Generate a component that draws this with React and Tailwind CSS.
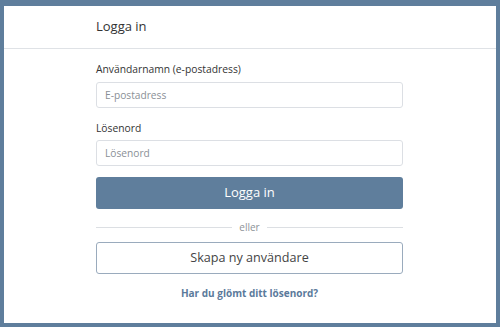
import React from 'react';

const App = () => {
  return (
    <div className="h-[327px] bg-[#5f7e9c] pt-[6px] px-[4px] pb-[4px] font-['Open_Sans',sans-serif]">
      <div className="bg-white h-[317px]">
        {/* Header */}
        <div className="h-[43px] border-b border-[#dfe2e6] flex items-center pl-[92px] text-[13px] text-[#333]">
          Logga in
        </div>

        {/* Form */}
        <form className="pl-[92px] w-[399px]" onSubmit={e => e.preventDefault()}>
          <label className="block mt-[12px] text-[10.3px] leading-[16px] text-[#333]">Användarnamn (e-postadress)</label>
          <input
            type="email"
            placeholder="E-postadress"
            className="mt-[5px] block h-[26px] w-full rounded-[3px] border border-[#dcdfe4] px-[8px] text-[10.2px] text-[#333] placeholder:text-[#8a8f96] outline-none"
          />

          <label className="block mt-[12px] text-[10.3px] leading-[16px] text-[#333]">Lösenord</label>
          <input
            type="password"
            placeholder="Lösenord"
            className="mt-[4px] block h-[26px] w-full rounded-[3px] border border-[#dcdfe4] px-[8px] text-[10.2px] text-[#333] placeholder:text-[#8a8f96] outline-none"
          />

          <button type="submit" className="mt-[11px] block h-[32px] w-full rounded-[3px] bg-[#5f7e9c] text-[13px] text-white">
            Logga in
          </button>

          <div className="mt-[10px] flex h-[16px] items-center gap-[7px]">
            <div className="h-px flex-1 bg-[#dcdfe3]" />
            <span className="text-[10px] leading-none text-[#8d9297]">eller</span>
            <div className="h-px flex-1 bg-[#dcdfe3]" />
          </div>

          <button type="button" className="mt-[7px] block h-[32px] w-full rounded-[3px] border border-[#9aabbd] bg-white text-[12.6px] text-[#444]">
            Skapa ny användare
          </button>

          <div className="mt-[12px] text-center text-[10px] leading-[14px]">
            <a href="#" className="font-bold text-[#5b7a9b]">Har du glömt ditt lösenord?</a>
          </div>
        </form>
      </div>
    </div>
  );
};

export default App;
